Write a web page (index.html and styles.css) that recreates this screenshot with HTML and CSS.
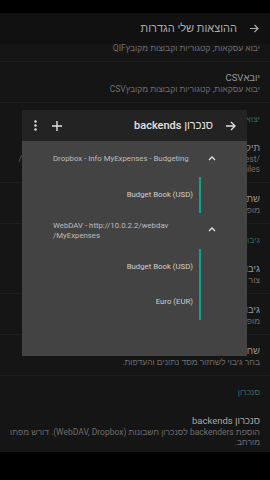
FILE: index.html
```html
<!DOCTYPE html>
<html lang="he" dir="rtl">
<head>
    <meta charset="UTF-8">
    <meta name="viewport" content="width=device-width, initial-scale=1.0">
    <title>הגדרות</title>
    <link rel="stylesheet" href="styles.css">
</head>
<body>
    <div class="screen">
        <div class="status-bar"></div>

        <header class="toolbar">
            <svg class="back" width="9" height="9" viewBox="0 0 9 9"><path d="M0 4.5H8M4.5 1L8 4.5L4.5 8" fill="none" stroke="currentColor" stroke-width="1.2"/></svg>
            <h1>ההוצאות שלי הגדרות</h1>
        </header>

        <div class="prefs">
            <div class="prefs-inner">
                <div class="pref">
                    <div class="pref-title">יבוא QIF</div>
                    <div class="pref-sum">יבוא עסקאות, קטגוריות וקבוצות מקובץQIF</div>
                </div>
                <div class="pref">
                    <div class="pref-title">יובאCSV</div>
                    <div class="pref-sum">יבוא עסקאות, קטגוריות וקבוצות מקובץCSV</div>
                </div>

                <div class="category">יצוא</div>
                <div class="pref">
                    <div class="pref-title">תיקיית יעד לקבצים</div>
                    <div class="pref-sum">/storage/emulated/0/Android/data/org.totschnig.expense/test/</div>
                    <div class="pref-sum">Files</div>
                </div>
                <div class="pref">
                    <div class="pref-title">שתף קבצים מיוצאים</div>
                    <div class="pref-sum">מופעל: קבצים ישותפו לאחר הייצוא</div>
                </div>

                <div class="category">גיבוי</div>
                <div class="pref">
                    <div class="pref-title">גיבוי</div>
                    <div class="pref-sum">צור גיבוי של מסד הנתונים וההעדפות</div>
                </div>
                <div class="pref">
                    <div class="pref-title">גיבוי אוטומטי</div>
                    <div class="pref-sum">מופעל: גיבוי יומי</div>
                </div>
                <div class="pref">
                    <div class="pref-title">שחזור</div>
                    <div class="pref-sum">בחר גיבוי לשחזור מסד נתונים והעדפות.</div>
                </div>

                <div class="category">סנכרון</div>
                <div class="pref">
                    <div class="pref-title bright">סנכרון backends</div>
                    <div class="pref-sum">הוספת backenders לסנכרון חשבונות (WebDAV, Dropbox). דורש מפתח</div>
                    <div class="pref-sum">מורחב.</div>
                </div>
            </div>
        </div>

        <div class="nav-bar"></div>

        <div class="dialog">
            <div class="dialog-head">
                <svg class="back" width="10" height="10" viewBox="0 0 10 10"><path d="M0 5H9M5 1L9 5L5 9" fill="none" stroke="currentColor" stroke-width="1.3"/></svg>
                <h2>סנכרון backends</h2>
                <span class="spacer"></span>
                <svg class="plus" width="10" height="10" viewBox="0 0 10 10"><path d="M5 0V10M0 5H10" stroke="currentColor" stroke-width="1.4"/></svg>
                <svg class="more" width="3" height="11" viewBox="0 0 3 11"><circle cx="1.5" cy="1.5" r="1.2"/><circle cx="1.5" cy="5.5" r="1.2"/><circle cx="1.5" cy="9.5" r="1.2"/></svg>
            </div>

            <div class="dialog-body">
                <div class="group">
                    <svg class="chevron" width="8" height="5" viewBox="0 0 8 5"><path d="M1 4L4 1L7 4" fill="none" stroke="currentColor" stroke-width="1.3"/></svg>
                    <div class="group-name" dir="ltr">Dropbox - Info MyExpenses - Budgeting</div>
                </div>
                <div class="children">
                    <div class="child" dir="ltr">Budget Book (USD)</div>
                </div>

                <div class="group">
                    <svg class="chevron" width="8" height="5" viewBox="0 0 8 5"><path d="M1 4L4 1L7 4" fill="none" stroke="currentColor" stroke-width="1.3"/></svg>
                    <div class="group-name" dir="ltr">WebDAV - http://10.0.2.2/webdav<br>/MyExpenses</div>
                </div>
                <div class="children">
                    <div class="child" dir="ltr">Budget Book (USD)</div>
                    <div class="child" dir="ltr">Euro (EUR)</div>
                </div>
            </div>
        </div>
    </div>
</body>
</html>
```

FILE: styles.css
```css
*{box-sizing:border-box;margin:0;padding:0}
body{font-family:Roboto,"Liberation Sans","Noto Sans",sans-serif;background:#000;width:270px;height:480px;overflow:hidden}
.screen{position:relative;width:270px;height:480px;display:flex;flex-direction:column;background:#000}
.status-bar{height:13px;background:#000}
.toolbar{height:31px;background:#111;display:flex;align-items:center;gap:13px;padding-right:11px;color:#ababab}
.toolbar h1{font-size:11px;font-weight:400;line-height:14px;color:#ababab}
.prefs{height:408px;background:#151515;overflow:hidden}
.prefs-inner{margin-top:-23px}
.pref{padding:10px 10px 8px;border-bottom:1px solid #1e1e1e}
.pref-title{height:12px;font-size:9.5px;line-height:12px;color:#959595;white-space:nowrap;overflow:hidden}
.pref-title.bright{color:#a8a8a8}
.pref-sum{height:10px;font-size:8.5px;line-height:10px;color:#6e6e6e;white-space:nowrap;overflow:hidden}
.category{height:29px;padding:10px 10px 0;font-size:8.5px;line-height:12px;color:#2f6b62}
.nav-bar{flex:1;background:#000}

.dialog{position:absolute;left:22px;top:110px;width:225px;height:246px;background:#434343;color:#c4c4c4}
.dialog-head{height:31px;background:#232323;display:flex;align-items:center;padding:0 11px 0 12px;color:#e2e2e2}
.dialog-head h2{font-size:11px;font-weight:500;line-height:14px;margin-right:13px;color:#e4e4e4}
.spacer{flex:1}
.plus{margin-left:15px}
.more{fill:#e2e2e2}
.group{height:36px;display:flex;align-items:center;padding:0 28px 0 31px}
.chevron{color:#e0e0e0;width:14px;flex:none;margin-top:-2px}
.group-name{flex:1;font-size:7.8px;line-height:10px;color:#bdbdbd;text-align:left}
.children{margin-right:46px;border-right:2px solid #13a28b}
.child{height:35.5px;display:flex;align-items:center;justify-content:flex-end;padding-right:6px;font-size:7.8px;color:#cfcfcf}
```
